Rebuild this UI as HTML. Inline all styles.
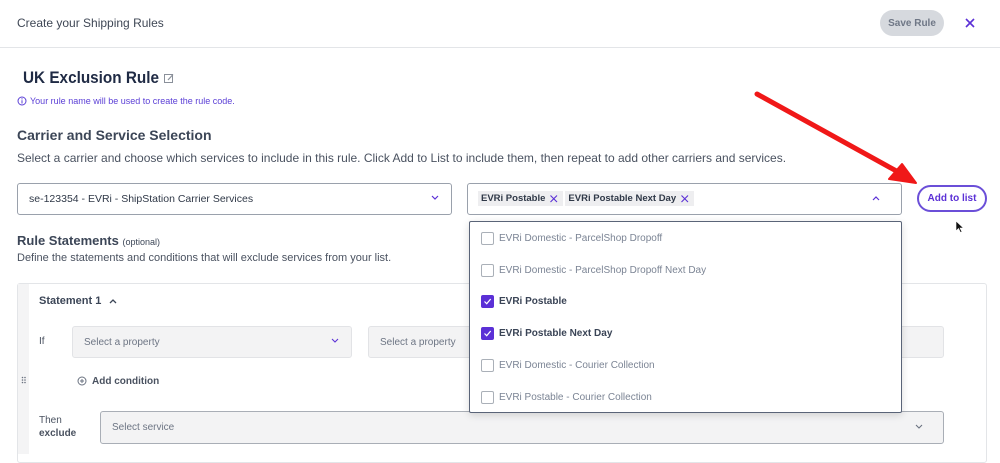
<!DOCTYPE html>
<html><head><meta charset="utf-8"><style>
*{box-sizing:border-box;margin:0;padding:0}
body{width:1000px;height:450px;overflow:hidden;background:#fff;font-family:"Liberation Sans",sans-serif;color:#3a4456;position:relative}
.a{position:absolute;white-space:nowrap}
.sel{position:absolute;border:1px solid #9aa1ac;border-radius:3px;background:#fff}
.gray{position:absolute;background:#f3f3f4;border:1px solid #e2e3e6;border-radius:3px}
.chk{position:absolute;left:11px;width:13px;height:13px;border:1px solid #aab0b8;border-radius:2px;background:#fff}
.chk.on{background:#5b30d6;border-color:#5b30d6}
.it{position:absolute;left:29px;font-size:10px;color:#7b8494}
.it.b{color:#3a4456;font-weight:bold}
.chip{display:inline-flex;align-items:center;height:15px;background:#eeeef0;padding:0 4px 0 3px;font-size:9.5px;font-weight:bold;color:#2f3847;margin-right:2px}
.chip svg{margin-left:4px}
</style></head><body>
<div class="a" style="left:17px;top:16px;font-size:12px;color:#3f4755">Create your Shipping Rules</div>
<div class="a" style="left:880px;top:10px;width:64px;height:26px;border-radius:13px;background:#d6d9de;color:#6f7786;font-size:10px;font-weight:bold;text-align:center;line-height:27px">Save Rule</div>
<svg class="a" style="left:964px;top:17px" width="12" height="12"><path d="M2 2L10 10M10 2L2 10" stroke="#5b30d6" stroke-width="1.6"/></svg>
<div class="a" style="left:0;top:47px;width:1000px;height:1px;background:#e3e5e8"></div>

<div class="a" style="left:23px;top:68px;font-size:17px;font-weight:bold;color:#1f2a44;transform:scaleX(0.9);transform-origin:0 0">UK Exclusion Rule</div>
<svg class="a" style="left:163px;top:72px" width="12" height="12"><rect x="1.5" y="2.5" width="8" height="8" fill="none" stroke="#8a909a" stroke-width="1"/><path d="M5 8L10 2.5" stroke="#8a909a" stroke-width="1.2"/></svg>
<svg class="a" style="left:17px;top:96px" width="10" height="10"><circle cx="5" cy="5" r="4" fill="none" stroke="#5b3fd6" stroke-width="1"/><path d="M5 4.2V7.5" stroke="#5b3fd6"/><circle cx="5" cy="2.9" r=".6" fill="#5b3fd6"/></svg>
<div class="a" style="left:30px;top:96px;font-size:9px;color:#5b3fd6">Your rule name will be used to create the rule code.</div>

<div class="a" style="left:17px;top:127px;font-size:14px;font-weight:bold;color:#3c4657">Carrier and Service Selection</div>
<div class="a" style="left:17px;top:151px;font-size:12px;color:#4a5260">Select a carrier and choose which services to include in this rule. Click Add to List to include them, then repeat to add other carriers and services.</div>

<div class="sel" style="left:17px;top:183px;width:435px;height:32px"></div>
<div class="a" style="left:29px;top:193px;font-size:10.5px;color:#2f3847">se-123354 - EVRi - ShipStation Carrier Services</div>
<svg class="a" style="left:430px;top:194px" width="10" height="8"><path d="M2 2L5 5L8 2" stroke="#5b30d6" fill="none" stroke-width="1.2"/></svg>

<div class="sel" style="left:467px;top:183px;width:435px;height:32px"></div>
<div class="a" style="left:478px;top:191px;display:flex">
<span class="chip">EVRi Postable<svg width="10" height="10"><path d="M1.5 1.5L8 8M8 1.5L1.5 8" stroke="#5b30d6" stroke-width="1.1"/></svg></span>
<span class="chip">EVRi Postable Next Day<svg width="10" height="10"><path d="M1.5 1.5L8 8M8 1.5L1.5 8" stroke="#5b30d6" stroke-width="1.1"/></svg></span>
</div>
<svg class="a" style="left:871px;top:194px" width="10" height="8"><path d="M2 6L5 3L8 6" stroke="#5b30d6" fill="none" stroke-width="1.2"/></svg>

<div class="a" style="left:917px;top:185px;width:70px;height:27px;border:2px solid #6b4fd8;border-radius:14px;color:#5b30d6;font-size:10px;font-weight:bold;text-align:center;line-height:24px">Add to list</div>
<svg class="a" style="left:955px;top:220px" width="10" height="14"><path d="M1 1L1 11L3.5 8.5L5.5 12.5L7 11.8L5 8L8.5 8Z" fill="#111" stroke="#fff" stroke-width=".6"/></svg>

<div class="a" style="left:17px;top:233px;font-size:13px;font-weight:bold;color:#3c4657">Rule Statements <span style="font-size:9px;font-weight:normal">(optional)</span></div>
<div class="a" style="left:17px;top:252px;font-size:11px;color:#4a5260">Define the statements and conditions that will exclude services from your list.</div>

<div class="a" style="left:17px;top:283px;width:970px;height:180px;border:1px solid #e3e5e8;border-radius:3px"></div>
<div class="a" style="left:18px;top:284px;width:11px;height:170px;background:#f4f4f5"></div>
<svg class="a" style="left:21px;top:376px" width="6" height="8"><g fill="#6a7280"><circle cx="1.5" cy="1.5" r=".8"/><circle cx="4" cy="1.5" r=".8"/><circle cx="1.5" cy="4" r=".8"/><circle cx="4" cy="4" r=".8"/><circle cx="1.5" cy="6.5" r=".8"/><circle cx="4" cy="6.5" r=".8"/></g></svg>
<div class="a" style="left:39px;top:295px;font-size:11px;font-weight:bold;color:#3c4657">Statement 1</div>
<svg class="a" style="left:108px;top:297px" width="10" height="8"><path d="M2 6L5 3L8 6" stroke="#3c4657" fill="none" stroke-width="1.3"/></svg>
<div class="a" style="left:39px;top:336px;font-size:10px;color:#4a5260">If</div>
<div class="gray" style="left:72px;top:326px;width:280px;height:32px"></div>
<div class="a" style="left:84px;top:337px;font-size:10px;color:#6d7584">Select a property</div>
<svg class="a" style="left:330px;top:337px" width="10" height="8"><path d="M2 2L5 5L8 2" stroke="#5b30d6" fill="none" stroke-width="1.1"/></svg>
<div class="gray" style="left:368px;top:326px;width:576px;height:32px"></div>
<div class="a" style="left:380px;top:337px;font-size:10px;color:#6d7584">Select a property</div>
<svg class="a" style="left:77px;top:376px" width="10" height="10"><circle cx="5" cy="5" r="4" fill="none" stroke="#6a7280"/><path d="M5 3V7M3 5H7" stroke="#6a7280"/></svg>
<div class="a" style="left:92px;top:376px;font-size:10px;font-weight:bold;color:#4a5260">Add condition</div>
<div class="a" style="left:39px;top:414px;font-size:10px;color:#4a5260;line-height:13px">Then<br><b>exclude</b></div>
<div class="gray" style="left:100px;top:411px;width:844px;height:33px;border-color:#a9aeb6"></div>
<div class="a" style="left:112px;top:422px;font-size:10px;color:#6d7584">Select service</div>
<svg class="a" style="left:914px;top:423px" width="10" height="8"><path d="M2 2L5 5L8 2" stroke="#6a7280" fill="none" stroke-width="1.1"/></svg>

<div class="a" style="left:469px;top:221px;width:433px;height:192px;background:#fff;border:1px solid #5a6478;border-radius:2px;box-shadow:0 2px 8px rgba(0,0,0,.15)">
<div class="chk" style="top:10px"></div><div class="it" style="top:11px">EVRi Domestic - ParcelShop Dropoff</div>
<div class="chk" style="top:42px"></div><div class="it" style="top:43px">EVRi Domestic - ParcelShop Dropoff Next Day</div>
<div class="chk on" style="top:73px"><svg width="11" height="11" style="position:absolute;left:0;top:0"><path d="M2.5 5.5L4.7 7.7L8.7 3" stroke="#fff" fill="none" stroke-width="1.2"/></svg></div><div class="it b" style="top:74px">EVRi Postable</div>
<div class="chk on" style="top:105px"><svg width="11" height="11" style="position:absolute;left:0;top:0"><path d="M2.5 5.5L4.7 7.7L8.7 3" stroke="#fff" fill="none" stroke-width="1.2"/></svg></div><div class="it b" style="top:106px">EVRi Postable Next Day</div>
<div class="chk" style="top:137px"></div><div class="it" style="top:138px">EVRi Domestic - Courier Collection</div>
<div class="chk" style="top:169px"></div><div class="it" style="top:170px">EVRi Postable - Courier Collection</div>
</div>

<svg class="a" style="left:0;top:0" width="1000" height="450"><path d="M757 94L900 173" stroke="#f01818" stroke-width="5" stroke-linecap="round"/><path d="M916 183L889 179L902 164Z" fill="#f01818" stroke="#f01818" stroke-width="2" stroke-linejoin="round"/></svg>
</body></html>
